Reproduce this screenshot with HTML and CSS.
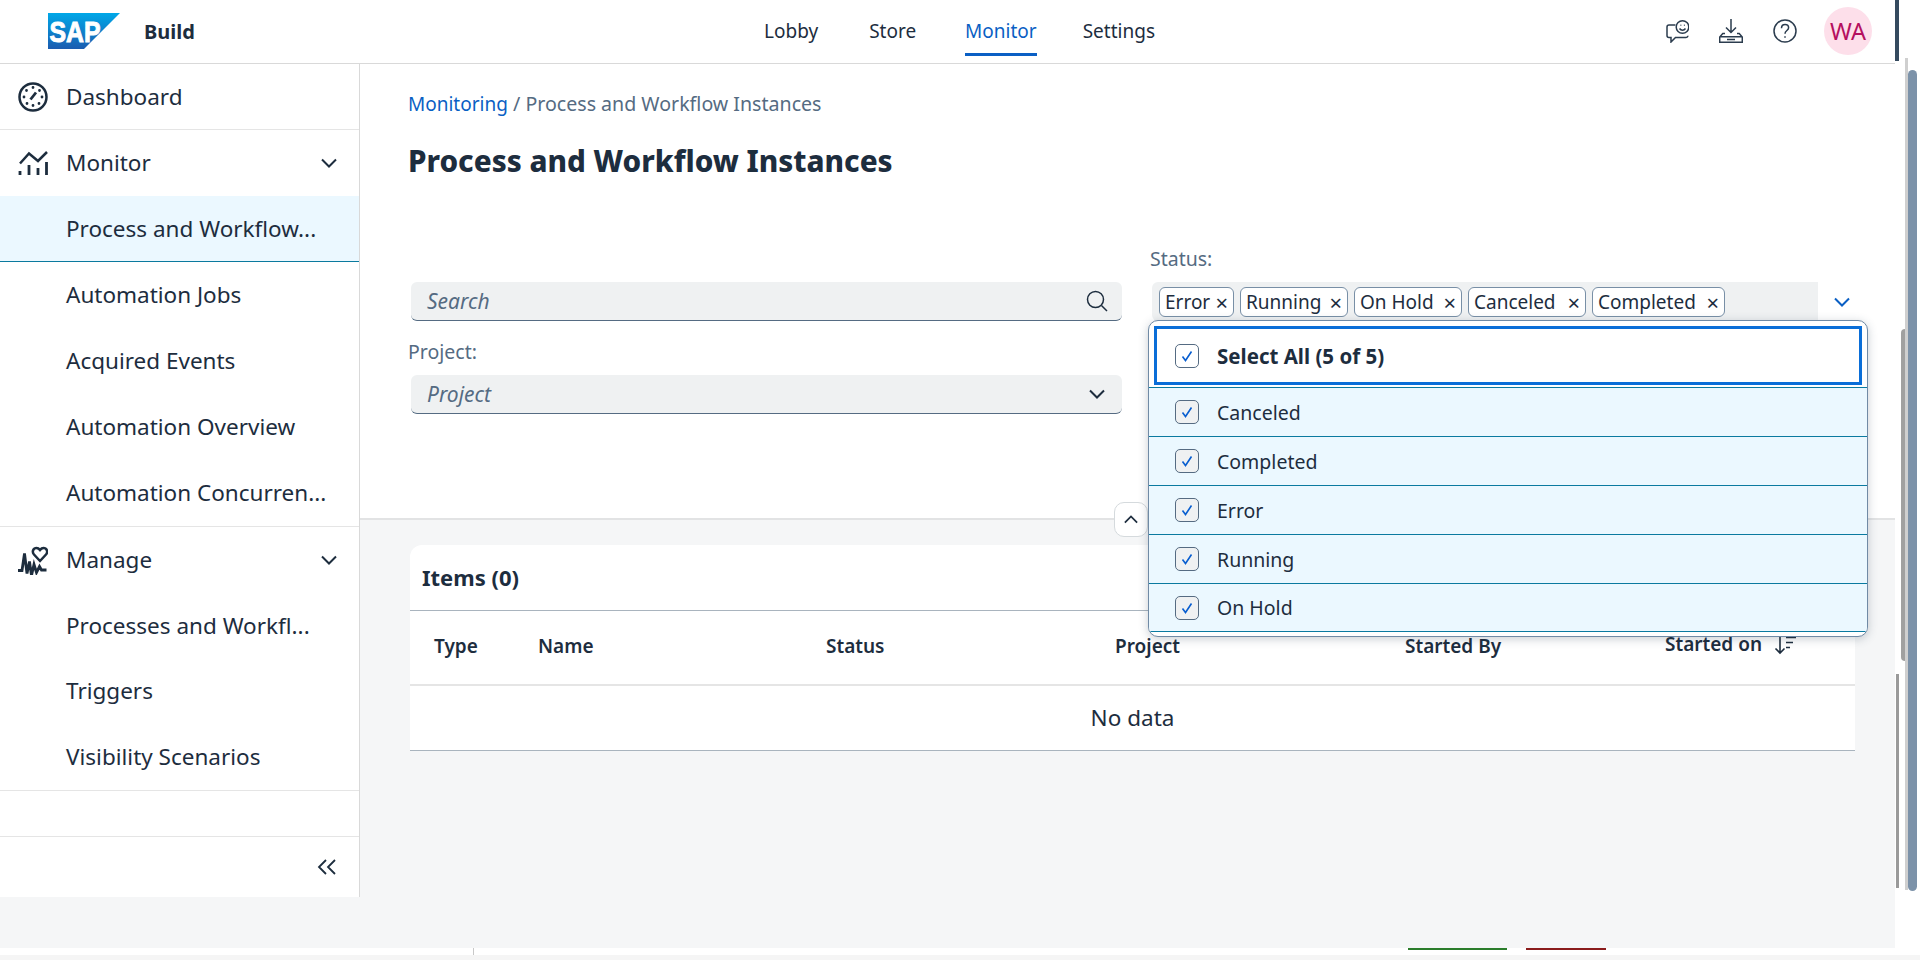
FILE: index.html
```html
<!DOCTYPE html>
<html lang="en">
<head>
  <meta charset="UTF-8" />
  <title>Process and Workflow Instances</title>
  <link rel="stylesheet" href="styles.css">
</head>
<body>
  <div class="app">
    <header class="topbar">
      <div class="brand">
        <svg class="logo" viewBox="0 0 72 36">
          <defs>
            <linearGradient id="sapblue" x1="0" y1="0" x2="0" y2="1">
              <stop offset="0" stop-color="#00a8e8" />
              <stop offset="1" stop-color="#1b5cb0" />
            </linearGradient>
          </defs>
          <polygon points="0,0 72,0 36,36 0,36" fill="url(#sapblue)" />
          <text x="1.500" y="29" textLength="51" lengthAdjust="spacingAndGlyphs" class="logo-text">SAP</text>
        </svg>
        <span class="brand-name">Build</span>
      </div>
      <nav class="nav">
        <a>Lobby</a>
        <a>Store</a>
        <a class="active">Monitor</a>
        <a>Settings</a>
      </nav>
      <div class="tools">
        <svg class="tool" viewBox="0 0 24 24"><path d="M10.500 6H4a2 2 0 0 0-2 2v8.500a2 2 0 0 0 2 2h2v4.500l4.500-4.500H21a2 2 0 0 0 2-1.800" /><circle cx="17.500" cy="8" r="6.300" /><path d="M14.500 9.500c1.500 2.200 4.500 2.200 6 0M15.500 6.300h.8M18.900 6.300h.8" /></svg>
        <svg class="tool" viewBox="0 0 24 24"><path d="M12 0v13.500M7 8.500l5 5 5-5M6 14.500H3.800L.7 18v5.300h22.600V18l-3.100-3.500H18M.7 17.800h22.600M8 20.500h8" /></svg>
        <svg class="tool" viewBox="0 0 24 24"><circle cx="12" cy="12" r="11" /><path d="M8.500 9.200c0-2.200 1.600-3.700 3.600-3.700s3.500 1.400 3.500 3.200c0 2.800-3.600 2.800-3.600 6M12 17.300v1.400" /></svg>
        <div class="avatar">WA</div>
      </div>
    </header>

    <div class="workspace">
      <aside class="sidebar">
        <a class="side-row side-sep">
          <svg class="side-icon" viewBox="0 0 30 30"><circle cx="15" cy="15" r="13.500" /><path class="thick" d="M12.500 17.500l5.500-7" /><path class="dots" d="M15 5.500v.1M8.500 8.500v.1M6 15v.1M24 15v.1M21.500 8.500v.1M9 21.500v.1M15 23.500v.1M21 21.500v.1" /></svg>
          <span>Dashboard</span>
        </a>
        <div class="side-group side-sep">
          <a class="side-row">
            <svg class="side-icon" viewBox="0 0 30 30"><path d="M2 15.500l9-10 9 7.500 9-9" /><path class="thick" d="M2 23v4M11 17v10M20 20v7M28.500 14v13" /></svg>
            <span>Monitor</span>
            <svg class="side-chevron" viewBox="0 0 16 10"><path d="M1 1.500l7 7 7-7" /></svg>
          </a>
          <a class="side-row sub selected"><span>Process and Workflow...</span></a>
          <a class="side-row sub"><span>Automation Jobs</span></a>
          <a class="side-row sub"><span>Acquired Events</span></a>
          <a class="side-row sub"><span>Automation Overview</span></a>
          <a class="side-row sub"><span>Automation Concurren...</span></a>
        </div>
        <div class="side-group side-sep manage">
          <a class="side-row">
            <svg class="side-icon" viewBox="0 0 30 30"><path d="M22 16l-6-6.500c-2.500-3-.5-6.500 2.500-6.500 1.500 0 2.500.7 3.500 2 1-1.300 2-2 3.500-2 3 0 5 3.500 2.500 6.500z" /><path class="thick" d="M0 25.500h4l2.500-17 2.500 20 2.500-12 2 14 2.500-11 2.500 8 3-6 2 3.500h5" /></svg>
            <span>Manage</span>
            <svg class="side-chevron" viewBox="0 0 16 10"><path d="M1 1.500l7 7 7-7" /></svg>
          </a>
          <a class="side-row sub"><span>Processes and Workfl...</span></a>
          <a class="side-row sub"><span>Triggers</span></a>
          <a class="side-row sub"><span>Visibility Scenarios</span></a>
        </div>
        <div class="side-spacer side-sep"></div>
        <div class="side-collapse">
          <svg class="collapse-icon" viewBox="0 0 20 16"><path d="M9 1L2 8l7 7M18 1l-7 7 7 7" /></svg>
        </div>
      </aside>

      <main class="content">
        <section class="filters">
          <div class="crumbs"><a>Monitoring</a> / Process and Workflow Instances</div>
          <h1>Process and Workflow Instances</h1>
          <div class="filter-grid">
            <div class="field">
              <div class="input">
                <span class="placeholder">Search</span>
                <svg class="input-icon" viewBox="0 0 22 22"><circle cx="9.500" cy="9.500" r="8" /><path d="M15.500 15.500l5.500 5.500" /></svg>
              </div>
            </div>
            <div class="field status-field">
              <label>Status:</label>
              <div class="multi">
                <div class="tokens">
                  <span class="token">Error <i>×</i></span>
                  <span class="token">Running <i>×</i></span>
                  <span class="token">On Hold <i>×</i></span>
                  <span class="token">Canceled <i>×</i></span>
                  <span class="token">Completed <i>×</i></span>
                </div>
                <div class="multi-btn">
                  <svg viewBox="0 0 16 10"><path d="M1 1.500l7 7 7-7" /></svg>
                </div>
              </div>
              <div class="popover">
                <div class="opt-all">
                  <span class="check"><svg viewBox="0 0 14 14"><path d="M2.500 7.500l3 4 6-9" /></svg></span>
                  <b>Select All (5 of 5)</b>
                </div>
                <div class="opt"><span class="check"><svg viewBox="0 0 14 14"><path d="M2.500 7.500l3 4 6-9" /></svg></span>Canceled</div>
                <div class="opt"><span class="check"><svg viewBox="0 0 14 14"><path d="M2.500 7.500l3 4 6-9" /></svg></span>Completed</div>
                <div class="opt"><span class="check"><svg viewBox="0 0 14 14"><path d="M2.500 7.500l3 4 6-9" /></svg></span>Error</div>
                <div class="opt"><span class="check"><svg viewBox="0 0 14 14"><path d="M2.500 7.500l3 4 6-9" /></svg></span>Running</div>
                <div class="opt"><span class="check"><svg viewBox="0 0 14 14"><path d="M2.500 7.500l3 4 6-9" /></svg></span>On Hold</div>
              </div>
            </div>
            <div class="field project-field">
              <label>Project:</label>
              <div class="input">
                <span class="placeholder">Project</span>
                <svg class="input-icon small" viewBox="0 0 16 10"><path d="M1 1.500l7 7 7-7" /></svg>
              </div>
            </div>
          </div>
          <button class="fold"><svg viewBox="0 0 16 10"><path d="M1 8.500l7-7 7 7" /></svg></button>
        </section>

        <section class="card">
          <div class="card-title">Items (0)</div>
          <div class="table-head">
            <span>Type</span>
            <span>Name</span>
            <span>Status</span>
            <span>Project</span>
            <span>Started By</span>
            <span class="sorted">Started on
              <svg viewBox="0 0 24 20"><path d="M6 1v17M1.500 13.500L6 18l4.500-4.500M12 2.500h10M12 7.500h7M12 12.500h4" /></svg>
            </span>
          </div>
          <div class="no-data">No data</div>
        </section>
      </main>
    </div>
  </div>

  <div class="under">
    <div class="under-line"></div>
    <div class="under-btn green"></div>
    <div class="under-btn red"></div>
  </div>
  <div class="under-foot"></div>

  <div class="edge-dark"></div>
  <div class="edge-thumb"></div>
  <div class="edge-inner"></div>
  <div class="edge-rail"></div>
  <div class="edge-main"></div>
</body>
</html>
```

FILE: styles.css
```css
* {
  box-sizing: border-box;
}
html, body {
  margin: 0;
  height: 100%;
  overflow: hidden;
  background: #fff;
}
body {
  font-family: "Noto Sans", Arial, sans-serif;
  color: #1d2d3e;
}
svg {
  fill: none;
  stroke: currentColor;
  stroke-width: 1.5;
}

.app {
  width: 1895px;
  height: 948px;
  background: #f5f6f7;
}

/* top bar */
.topbar {
  display: flex;
  align-items: center;
  height: 64px;
  padding: 0 23px 2px 48px;
  background: #fff;
  border-bottom: 1px solid #d9d9d9;
}
.brand {
  display: flex;
  align-items: center;
  width: 716px;
}
.logo {
  width: 72px;
  height: 36px;
  stroke: none;
}
.logo-text {
  font-family: "Liberation Sans", Arial, sans-serif;
  font-size: 30px;
  font-weight: 700;
  fill: #fff;
  stroke: #fff;
  stroke-width: 1;
}
.brand-name {
  margin-left: 24px;
  padding-top: 2px;
  font-size: 20px;
  font-weight: 700;
}
.nav {
  display: flex;
  gap: 47px;
  align-self: stretch;
  font-size: 19px;
}
.nav a {
  display: flex;
  align-items: center;
  height: 56px;
  padding-top: 8px;
  border-bottom: 3px solid transparent;
}
.nav a:first-child {
  margin-right: 4px;
}
.nav a.active {
  margin-left: 2px;
  margin-right: -1px;
  color: #0a5fc4;
  border-bottom-color: #0a5fc4;
}
.tools {
  display: flex;
  align-items: center;
  margin-left: auto;
}
.tool {
  width: 24px;
  height: 24px;
  margin-right: 30px;
  stroke: #2b3c4e;
  stroke-width: 1.5;
}
.avatar {
  display: flex;
  align-items: center;
  justify-content: center;
  width: 48px;
  height: 48px;
  margin-left: -3px;
  border-radius: 50%;
  background: #fddfea;
  color: #b5105f;
  font-size: 23.5px;
}

/* side navigation */
.workspace {
  display: flex;
}
.sidebar {
  width: 360px;
  height: 833px;
  background: #fff;
  border-right: 1px solid #d9d9d9;
  font-size: 22.5px;
}
.side-sep {
  border-bottom: 1px solid #e5e5e5;
}
.side-row {
  display: flex;
  align-items: center;
  height: 66px;
  padding-left: 18px;
}
.side-row span {
  margin-top: -1px;
}
.manage .sub {
  height: 65.5px;
}
.side-icon {
  width: 30px;
  height: 30px;
  margin-right: 18px;
  stroke: #1d2d3e;
  stroke-width: 2.5;
}
.side-icon .thick {
  stroke-width: 2.8;
}
.side-icon .dots {
  stroke-width: 2.8;
  stroke-linecap: round;
}
.side-chevron {
  width: 16px;
  height: 10px;
  margin-left: auto;
  margin-right: 22px;
  stroke-width: 2;
}
.sub {
  padding-left: 66px;
}
.selected {
  background: #ebf8ff;
  border-bottom: 1px solid #0a7a9e;
}
.side-spacer {
  height: 46px;
}
.side-collapse {
  display: flex;
  align-items: center;
  justify-content: flex-end;
  height: 60px;
  padding-right: 22px;
}
.collapse-icon {
  width: 20px;
  height: 16px;
  stroke-width: 1.8;
}

/* filter panel */
.content {
  flex: 1;
  min-width: 0;
}
.filters {
  position: relative;
  height: 456px;
  padding: 27px 29px 0 48px;
  background: #fff;
  border-bottom: 2px solid #e2e3e4;
}
.crumbs {
  height: 26px;
  font-size: 19.6px;
  line-height: 26px;
  color: #556b82;
}
.crumbs a {
  color: #0a5fc4;
  font-size: 19px;
}
h1 {
  margin: 25px 0 0;
  font-size: 29.6px;
  line-height: 38px;
  font-weight: 800;
}
.filter-grid {
  display: grid;
  grid-template-columns: 714px 718px;
  column-gap: 26px;
  margin-top: 66px;
}
.field {
  display: flex;
  flex-direction: column;
  justify-content: flex-end;
}
.field label {
  height: 26px;
  font-size: 19.5px;
  line-height: 26px;
  color: #556b82;
}
.status-field {
  position: relative;
}
.project-field {
  margin-top: 18px;
}
.project-field label {
  margin-bottom: 10px;
}
.input {
  display: flex;
  align-items: center;
  justify-content: space-between;
  height: 39px;
  margin-left: 3px;
  padding: 0 14px 0 16px;
  background: #eff1f2;
  border-bottom: 1px solid #556b82;
  border-radius: 6px;
}
.placeholder {
  font-size: 21px;
  font-style: italic;
  color: #556b82;
}
.input-icon {
  width: 22px;
  height: 22px;
}
.input-icon.small {
  width: 16px;
  height: 10px;
  margin-right: 3px;
  stroke-width: 2;
}
.status-field label {
  margin-left: 2px;
  margin-bottom: 10px;
}
.multi {
  display: flex;
  height: 39px;
  margin-left: 4px;
}
.tokens {
  display: grid;
  grid-template-columns: 75px 108px 108px 118px 133px;
  align-items: center;
  gap: 6px;
  width: 666px;
  padding-left: 7px;
  background: #eff1f2;
  border-radius: 6px 0 0 6px;
}
.token {
  display: flex;
  align-items: center;
  justify-content: space-between;
  height: 30px;
  padding: 0 5px;
  background: #fff;
  border: 1px solid #788fa6;
  border-radius: 6px;
  font-size: 19px;
}
.token i {
  font-style: normal;
  font-size: 22px;
}
.multi-btn {
  display: flex;
  align-items: center;
  justify-content: center;
  width: 48px;
  background: #fff;
  border-radius: 0 8px 8px 0;
  color: #0a5fc4;
}
.multi-btn svg {
  width: 16px;
  height: 10px;
  stroke-width: 2;
}

/* dropdown */
.popover {
  position: absolute;
  left: 0;
  top: 74px;
  width: 720px;
  height: 317px;
  overflow: hidden;
  z-index: 3;
  background: #fff;
  border: 1px solid #708aa5;
  border-radius: 10px;
  box-shadow: 0 2px 10px rgba(40, 60, 80, .25);
  font-size: 19.5px;
}
.opt-all {
  display: flex;
  align-items: center;
  height: 59px;
  margin: 5px 5px 2px 5px;
  padding-left: 18px;
  border: 3px solid #0a6ed8;
}
.opt-all b {
  font-size: 20.5px;
}
.opt {
  display: flex;
  align-items: center;
  height: 49px;
  padding-left: 26px;
  background: #ebf8ff;
  border-top: 1px solid #0a7aa0;
}
.opt:first-of-type {
  border-top-color: #c5ccd2;
}
.opt:last-child {
  border-bottom: 1px solid #0a7aa0;
}
.check {
  display: flex;
  align-items: center;
  justify-content: center;
  width: 24px;
  height: 24px;
  margin-right: 18px;
  background: #eff1f2;
  border: 1px solid #556b82;
  border-radius: 5px;
  color: #0a5fd0;
}
.opt-all .check {
  background: #fff;
}
.check svg {
  width: 14px;
  height: 14px;
  stroke-width: 1.6;
}
.fold {
  position: absolute;
  left: 754px;
  top: 438px;
  display: flex;
  align-items: center;
  justify-content: center;
  width: 34px;
  height: 35px;
  padding: 0;
  background: #fff;
  border: 1px solid #d5dadd;
  border-radius: 10px;
  color: #1d2d3e;
}
.fold svg {
  width: 14px;
  height: 9px;
  stroke-width: 2;
}

/* table card */
.card {
  width: 1445px;
  margin: 25px 0 0 50px;
  background: #fff;
  border-radius: 12px 12px 0 0;
  border-bottom: 1px solid #a9b4be;
}
.card-title {
  height: 66px;
  padding-left: 12px;
  font-size: 22px;
  font-weight: 700;
  line-height: 64px;
  border-bottom: 1px solid #a9b4be;
}
.table-head {
  display: grid;
  grid-template-columns: 104px 288px 289px 290px 260px 1fr;
  align-items: center;
  height: 75px;
  padding: 0 0 4px 24px;
  border-bottom: 2px solid #e5e5e5;
  font-size: 19px;
  font-weight: 600;
}
.sorted {
  display: flex;
  align-items: center;
  margin-top: -3px;
}
.sorted svg {
  width: 24px;
  height: 20px;
  margin-left: 12px;
  margin-top: 2px;
  stroke-width: 1.6;
}
.no-data {
  height: 64px;
  font-size: 22.5px;
  line-height: 64px;
  text-align: center;
}

/* strip of the page behind, and the window scrollbars */
.under {
  position: relative;
  height: 7px;
  background: #fff;
}
.under-line {
  position: absolute;
  left: 473px;
  top: 0;
  width: 1px;
  height: 7px;
  background: #c8c8c8;
}
.under-btn {
  position: absolute;
  top: 0;
  height: 2px;
}
.under-btn.green {
  left: 1408px;
  width: 99px;
  background: #2b7d2b;
}
.under-btn.red {
  left: 1526px;
  width: 80px;
  background: #8a1c1c;
}
.under-foot {
  height: 5px;
  background: #f5f5f5;
}
.edge-dark {
  position: absolute;
  left: 1895px;
  top: 0;
  width: 4px;
  height: 61px;
  background: #354a5f;
}
.edge-thumb {
  position: absolute;
  left: 1901px;
  top: 329px;
  width: 4px;
  height: 332px;
  background: #a0a0a0;
  border-radius: 4px 0 0 4px;
}
.edge-inner {
  position: absolute;
  left: 1896px;
  top: 674px;
  width: 3px;
  height: 214px;
  background: #9a9a9a;
}
.edge-rail {
  position: absolute;
  left: 1905px;
  top: 58px;
  width: 3px;
  height: 832px;
  background: #cfcfcf;
}
.edge-main {
  position: absolute;
  left: 1908px;
  top: 70px;
  width: 9px;
  height: 821px;
  background: #7c92a9;
  border-radius: 5px;
}
```
